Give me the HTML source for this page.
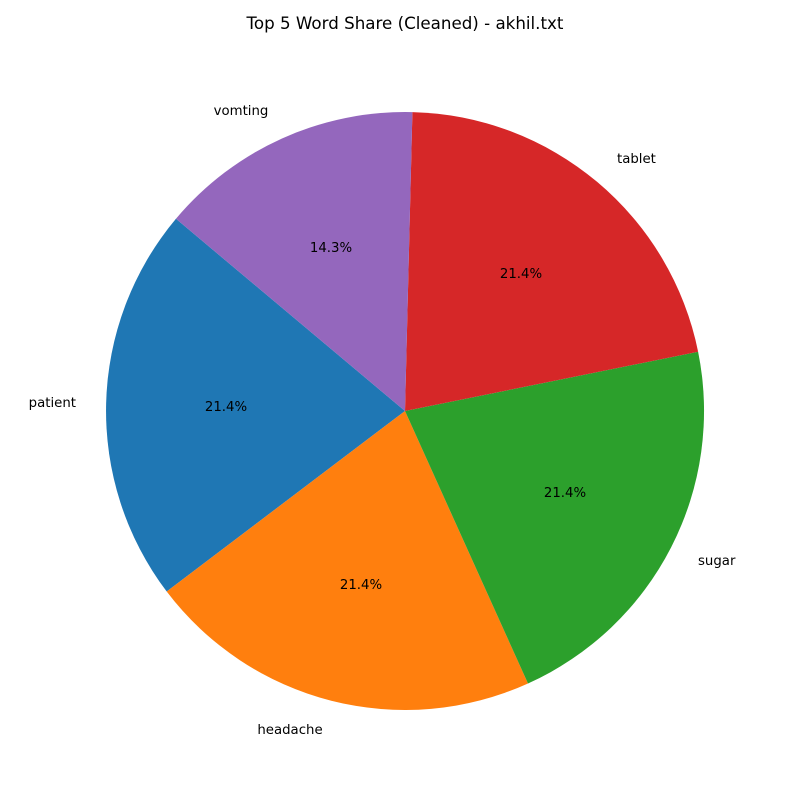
<!DOCTYPE html>
<html><head><meta charset="utf-8"><style>
html,body{margin:0;padding:0;background:#fff;}
svg{display:block;}
text{font-family:"DejaVu Sans","Liberation Sans",sans-serif;fill:#000;}
</style></head><body>
<svg width="800" height="800" viewBox="0 0 800 800">
<rect width="800" height="800" fill="#fff"/>
<text x="405" y="29" font-size="16.7" text-anchor="middle">Top 5 Word Share (Cleaned) - akhil.txt</text>
<g>
<path d="M405,411 L175.96,218.8 A299,299 0 0 0 166.7,591.5 Z" fill="#1f77b4"/>
<path d="M405,411 L166.7,591.5 A299,299 0 0 0 528.0,683.5 Z" fill="#ff7f0e"/>
<path d="M405,411 L528.0,683.5 A299,299 0 0 0 698.1,351.7 Z" fill="#2ca02c"/>
<path d="M405,411 L698.1,351.7 A299,299 0 0 0 412.4,112.1 Z" fill="#d62728"/>
<path d="M405,411 L412.4,112.1 A299,299 0 0 0 175.96,218.8 Z" fill="#9467bd"/>
</g>
<g font-size="13.3">
<text x="76" y="407" text-anchor="end">patient</text>
<text x="290" y="734" text-anchor="middle">headache</text>
<text x="698" y="565" text-anchor="start">sugar</text>
<text x="617" y="163" text-anchor="start">tablet</text>
<text x="241" y="115" text-anchor="middle">vomting</text>
<text x="226" y="411" text-anchor="middle">21.4%</text>
<text x="361" y="589" text-anchor="middle">21.4%</text>
<text x="565" y="497" text-anchor="middle">21.4%</text>
<text x="521" y="278" text-anchor="middle">21.4%</text>
<text x="331" y="252" text-anchor="middle">14.3%</text>
</g>
</svg>
</body></html>
